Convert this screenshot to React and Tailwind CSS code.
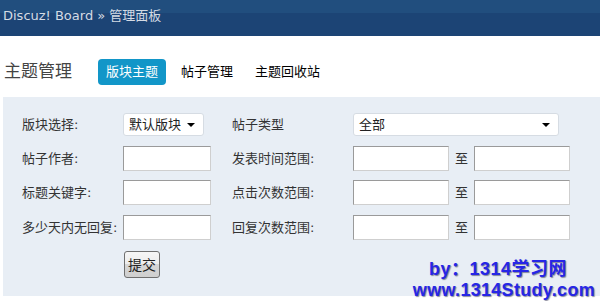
import React from 'react';

const font = { fontFamily: '"DejaVu Sans", "Noto Sans CJK SC", sans-serif' };

function TextInput({ width = 'w-[88px]' }) {
  return (
    <div className={`${width} h-[25px] bg-white border border-[#9a9a9a] border-b-[#cfcfcf] border-r-[#cfcfcf]`} />
  );
}

function Select({ value, width }) {
  return (
    <div
      className={`${width} h-[23px] bg-white border border-[#d6dce3] rounded-[3px] flex items-center justify-between pl-[5px] pr-[8px] text-[13px] text-[#222]`}
    >
      <span>{value}</span>
      <span className="w-0 h-0 border-l-[4px] border-r-[4px] border-t-[4px] border-l-transparent border-r-transparent border-t-black" />
    </div>
  );
}

function Range() {
  return (
    <div className="flex items-center">
      <TextInput width="w-[96px]" />
      <span className="w-[25px] text-center text-[13px] text-[#333]">至</span>
      <TextInput width="w-[96px]" />
    </div>
  );
}

function Row({ label1, control1, label2, control2, className }) {
  return (
    <div className={`flex items-center ${className}`}>
      <div className="w-[101px] text-[13px] text-[#333]">{label1}</div>
      <div className="w-[109px]">{control1}</div>
      <div className="w-[121px] text-[13px] text-[#333]">{label2}</div>
      <div>{control2}</div>
    </div>
  );
}

export default function App() {
  return (
    <div className="w-[600px] h-[301px] bg-white overflow-hidden relative" style={font}>
      {/* top bar */}
      <div className="h-[36px] bg-[#1c4475]">
        <div className="h-[13px] bg-[#214e7e]" />
        <div className="-mt-[13px] pl-[3px] pt-[8px] text-[13px] leading-[16px] text-[#d4dbe4]">
          Discuz! Board » 管理面板
        </div>
      </div>

      {/* title and tabs */}
      <div className="flex items-center h-[26px] mt-[23px] pl-[4px]">
        <h1 className="text-[17px] text-[#444] w-[94px]">主题管理</h1>
        <div className="h-[26px] px-[8px] bg-[#1296c8] rounded-[4px] text-white text-[13px] flex items-center">
          版块主题
        </div>
        <div className="ml-[15px] text-[13px] text-black">帖子管理</div>
        <div className="ml-[22px] text-[13px] text-black">主题回收站</div>
      </div>

      {/* search panel */}
      <div className="ml-[3px] mt-[12px] h-[199px] bg-[#e8eef5] pl-[19px] pt-[16px]">
        <Row
          className="h-[23px]"
          label1="版块选择:"
          control1={<Select value="默认版块" width="w-[81px]" />}
          label2="帖子类型"
          control2={<Select value="全部" width="w-[206px]" />}
        />
        <Row
          className="h-[25px] mt-[10px]"
          label1="帖子作者:"
          control1={<TextInput />}
          label2="发表时间范围:"
          control2={<Range />}
        />
        <Row
          className="h-[25px] mt-[9px]"
          label1="标题关键字:"
          control1={<TextInput />}
          label2="点击次数范围:"
          control2={<Range />}
        />
        <Row
          className="h-[25px] mt-[10px]"
          label1="多少天内无回复:"
          control1={<TextInput />}
          label2="回复次数范围:"
          control2={<Range />}
        />
        <button className="ml-[102px] mt-[11px] w-[36px] h-[27px] border border-[#6f6f6f] rounded-[3px] bg-[linear-gradient(#f6f6f6_0%,#ececec_50%,#d6d6d6_50%,#cfcfcf_100%)] text-[14px] text-[#222] leading-none">
          提交
        </button>
      </div>

      {/* watermark */}
      <div
        className="absolute right-[5px] bottom-[0px] text-right font-bold text-[#2626e6] leading-[21px] [text-shadow:1px_1px_1px_rgba(0,0,40,0.45)]"
        style={{ fontFamily: '"Liberation Sans", "Noto Sans CJK SC", sans-serif' }}
      >
        <div className="text-[18px] pr-[28px] tracking-[0.5px]">by：1314学习网</div>
        <div className="text-[18px] tracking-[0.3px]">www.1314Study.com</div>
      </div>
    </div>
  );
}
